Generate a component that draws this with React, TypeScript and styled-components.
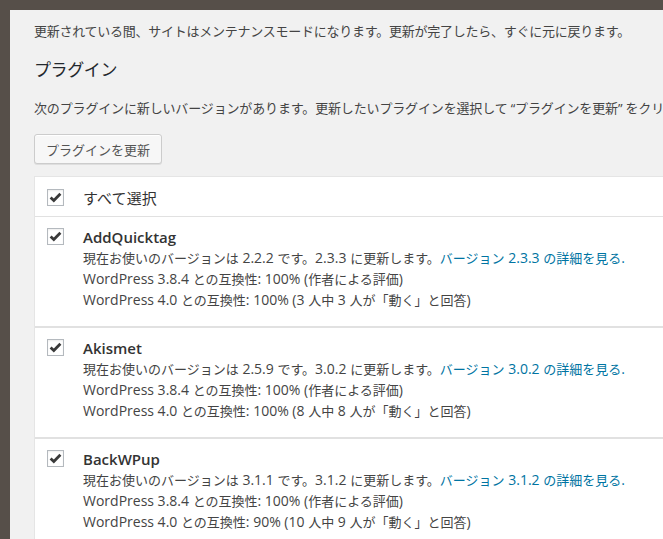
import React from "react";
import styled, { createGlobalStyle } from "styled-components";

const Global = createGlobalStyle`
  html, body {
    margin: 0;
    padding: 0;
    background: #564f49;
    overflow: hidden;
    height: 100%;
  }
  body {
    font-family: "Open Sans", "Noto Sans CJK JP", sans-serif;
    color: #444;
    font-size: 13px;
  }
`;

const Page = styled.div`
  margin: 10px 0 0 10px;
  width: 1000px;
  height: 560px;
  background: #f1f1f1;
  padding: 12px 0 0 24px;
  box-sizing: border-box;
`;

const Notice = styled.p`
  margin: 0;
  font-size: 13px;
  line-height: 19px;
  letter-spacing: -0.25px;
  white-space: nowrap;
`;

const Heading = styled.h3`
  margin: 17px 0 0;
  font-size: 17px;
  line-height: 24px;
  font-weight: 400;
  color: #23282d;
  letter-spacing: -0.4px;
`;

const Intro = styled.p`
  margin: 17px 0 0;
  font-size: 13px;
  line-height: 19px;
  letter-spacing: -0.15px;
  white-space: nowrap;
`;

const Button = styled.button`
  display: block;
  margin: 16px 0 0;
  height: 30px;
  padding: 0 11px;
  border: 1px solid #cccccc;
  border-radius: 3px;
  background: #f7f7f7;
  box-shadow: inset 0 1px 0 #fff, 0 1px 0 rgba(0, 0, 0, 0.08);
  font-family: "Open Sans", "Noto Sans CJK JP", sans-serif;
  font-size: 13px;
  color: #555;
  cursor: pointer;
`;

const Table = styled.div`
  margin-top: 12px;
  width: 900px;
  background: #fff;
  border: 1px solid #e5e5e5;
  border-bottom: none;
`;

const Row = styled.div<{ $plugin?: boolean }>`
  display: flex;
  align-items: flex-start;
  padding: ${(p) => (p.$plugin ? "10px 0 16px" : "12px 0 9px")};
  border-bottom: ${(p) => (p.$plugin ? "2px" : "1px")} solid #e1e1e1;
`;

const CheckCell = styled.div<{ $plugin?: boolean }>`
  width: 48px;
  flex: none;
  padding-left: 12px;
  padding-top: ${(p) => (p.$plugin ? "1px" : "0")};
  box-sizing: border-box;
`;

const Box = styled.span`
  display: flex;
  align-items: center;
  justify-content: center;
  width: 17px;
  height: 17px;
  box-sizing: border-box;
  border: 1px solid #b4b9be;
  background: #fff;
  box-shadow: inset 0 1px 2px rgba(0, 0, 0, 0.07);
`;

const SelectLabel = styled.span`
  font-size: 15px;
  line-height: 18px;
  letter-spacing: 0.1px;
  color: #333;
`;

const Info = styled.div`
  display: flex;
  flex-direction: column;
`;

const Title = styled.strong`
  font-size: 15px;
  line-height: 20px;
  height: 20px;
  font-weight: 600;
  color: #333;
`;

const Line = styled.span`
  font-size: 14px;
  line-height: 21px;
  height: 21px;
  white-space: nowrap;
`;

const Ja = styled.span`
  font-size: 13px;
  line-height: 1;
`;

const Link = styled.a`
  color: #0074a2;
  text-decoration: none;
`;

const CJK = /([\u3000-\u30ff\u4e00-\u9fff\uff00-\uffef]+)/;

const Mixed = ({ text }: { text: string }) => (
  <>
    {text.split(CJK).map((part, i) =>
      CJK.test(part) ? <Ja key={i}>{part}</Ja> : <React.Fragment key={i}>{part}</React.Fragment>
    )}
  </>
);

const Check = () => (
  <Box>
    <svg width="13" height="11" viewBox="0 0 13 11">
      <path
        d="M1.6 5.6 L4.8 8.6 L11.4 1.8"
        fill="none"
        stroke="#3a3a3a"
        strokeWidth="2.8"
      />
    </svg>
  </Box>
);

type Plugin = {
  name: string;
  current: string;
  next: string;
  compat384: string;
  compat40: string;
  total: string;
  works: string;
};

const plugins: Plugin[] = [
  { name: "AddQuicktag", current: "2.2.2", next: "2.3.3", compat384: "100%", compat40: "100%", total: "3", works: "3" },
  { name: "Akismet", current: "2.5.9", next: "3.0.2", compat384: "100%", compat40: "100%", total: "8", works: "8" },
  { name: "BackWPup", current: "3.1.1", next: "3.1.2", compat384: "100%", compat40: "90%", total: "10", works: "9" },
];

export default function App() {
  return (
    <>
      <Global />
      <Page>
        <Notice>
          更新されている間、サイトはメンテナンスモードになります。更新が完了したら、すぐに元に戻ります。
        </Notice>
        <Heading>プラグイン</Heading>
        <Intro>
          次のプラグインに新しいバージョンがあります。更新したいプラグインを選択して “プラグインを更新” をクリックしてください。
        </Intro>
        <Button>プラグインを更新</Button>
        <Table>
          <Row>
            <CheckCell>
              <Check />
            </CheckCell>
            <SelectLabel>すべて選択</SelectLabel>
          </Row>
          {plugins.map((p) => (
            <Row $plugin key={p.name}>
              <CheckCell $plugin>
                <Check />
              </CheckCell>
              <Info>
                <Title>{p.name}</Title>
                <Line>
                  <Mixed text={`現在お使いのバージョンは ${p.current} です。${p.next} に更新します。`} />
                  <Link href="#">
                    <Mixed text={`バージョン ${p.next} の詳細を見る.`} />
                  </Link>
                </Line>
                <Line>
                  <Mixed text={`WordPress 3.8.4 との互換性: ${p.compat384} (作者による評価)`} />
                </Line>
                <Line>
                  <Mixed
                    text={`WordPress 4.0 との互換性: ${p.compat40} (${p.total} 人中 ${p.works} 人が「動く」と回答)`}
                  />
                </Line>
              </Info>
            </Row>
          ))}
        </Table>
      </Page>
    </>
  );
}
